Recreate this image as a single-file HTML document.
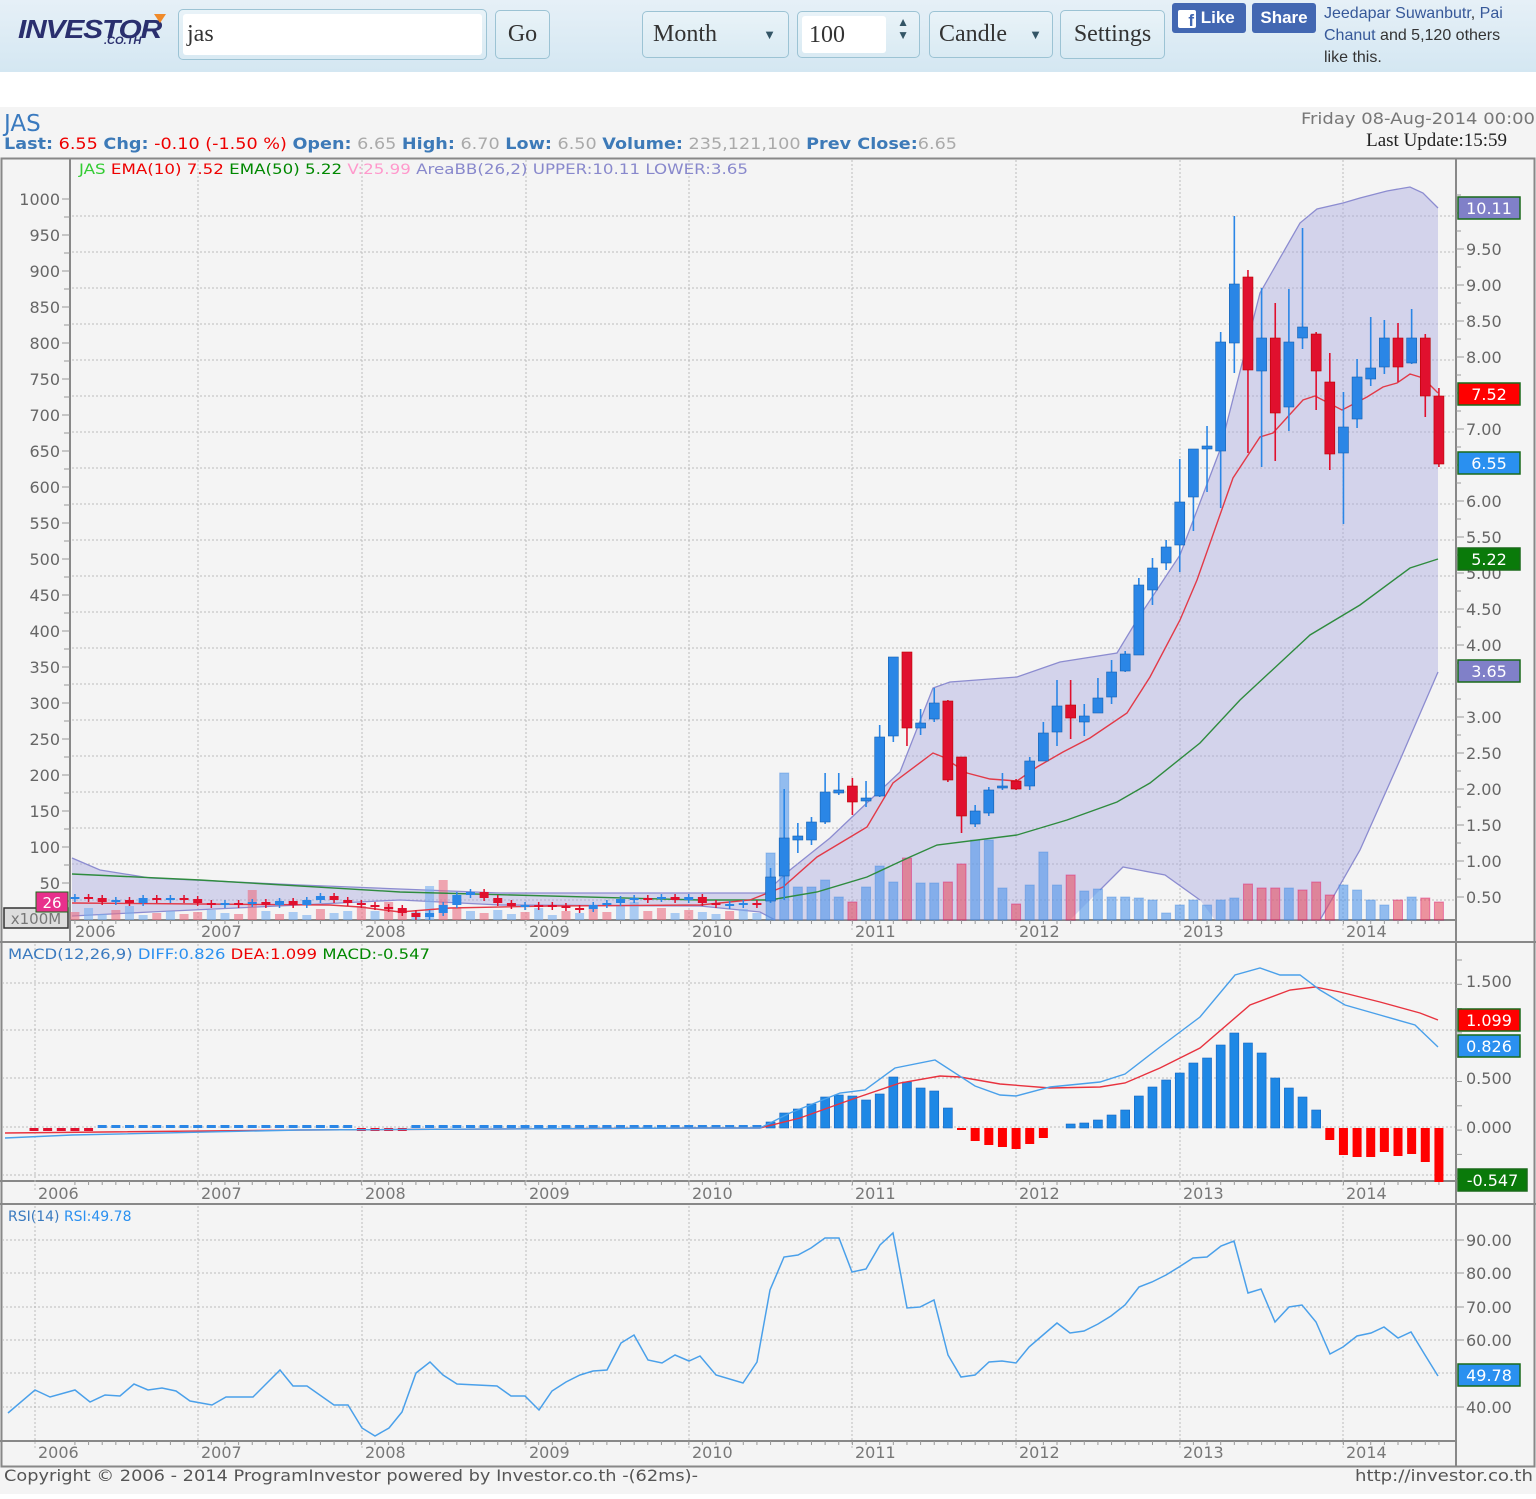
<!DOCTYPE html>
<html><head><meta charset="utf-8">
<style>
*{margin:0;padding:0;box-sizing:border-box}
html,body{width:1536px;height:1494px;overflow:hidden;background:#fff;font-family:"Liberation Sans",sans-serif}
#hdr{position:absolute;left:0;top:0;width:1536px;height:72px;background:linear-gradient(#e6f0f7,#d4e7f2)}
.box{position:absolute;border:1px solid #9cc3d4;border-radius:5px;background:linear-gradient(#e9f3f8,#d9eaf3);font-family:"Liberation Serif",serif;font-size:24px;color:#333}
#chart{position:absolute;left:0;top:107px;width:1536px;height:1387px;background:#f4f4f4}
svg text{font-family:"DejaVu Sans",sans-serif}
</style></head><body>
<div id="hdr">
  <div style="position:absolute;left:18px;top:14px;font:italic 900 26px 'Liberation Sans',sans-serif;color:#2a2f6e;letter-spacing:-1px;transform:scaleX(1.15);transform-origin:left">INVESTOR</div>
  <div style="position:absolute;left:154px;top:14px;width:0;height:0;border-left:6px solid transparent;border-right:6px solid transparent;border-top:9px solid #f08a2a"></div>
  <div style="position:absolute;left:104px;top:35px;font:italic 900 11px 'Liberation Sans',sans-serif;color:#2a2f6e">.CO.TH</div>
  <div class="box" style="left:178px;top:9px;width:309px;height:51px;padding:4px"><div style="background:#fff;height:100%;border-radius:3px;padding:6px 4px;line-height:28px">jas</div></div>
  <div class="box" style="left:495px;top:10px;width:55px;height:49px;text-align:center;line-height:47px">Go</div>
  <div class="box" style="left:642px;top:11px;width:147px;height:47px;line-height:45px;padding-left:10px">Month<span style="position:absolute;right:12px;font-size:13px;color:#356">▼</span></div>
  <div class="box" style="left:797px;top:11px;width:123px;height:47px;padding:4px"><div style="background:#fff;width:84px;height:100%;border-radius:3px;padding-left:7px;line-height:38px">100</div><span style="position:absolute;right:10px;top:4px;font-size:12px;line-height:13px;color:#356">▲<br>▼</span></div>
  <div class="box" style="left:929px;top:11px;width:124px;height:47px;line-height:45px;padding-left:9px">Candle<span style="position:absolute;right:10px;font-size:13px;color:#356">▼</span></div>
  <div class="box" style="left:1060px;top:10px;width:105px;height:49px;line-height:47px;text-align:center">Settings</div>
  <div style="position:absolute;left:1172px;top:3px;width:74px;height:30px;background:#4267b2;border-radius:3px;color:#fff;font:bold 17px 'Liberation Sans';line-height:30px;padding-left:6px"><span style="display:inline-block;width:18px;height:18px;background:#fff;color:#4267b2;border-radius:2px;font-size:17px;line-height:21px;text-align:right;padding-right:2px;vertical-align:-3px">f</span> Like</div>
  <div style="position:absolute;left:1252px;top:3px;width:64px;height:30px;background:#4267b2;border-radius:3px;color:#fff;font:bold 17px 'Liberation Sans';line-height:30px;text-align:center">Share</div>
  <div style="position:absolute;left:1324px;top:3px;width:198px;font:16px/22px 'Liberation Sans';color:#333"><span style="color:#365899">Jeedapar Suwanbutr</span>, <span style="color:#365899">Pai Chanut</span> and 5,120 others like this.</div>
</div>
<div id="chart"><svg id="s" width="1536" height="1387" viewBox="0 107 1536 1387" xmlns="http://www.w3.org/2000/svg"></svg></div>
<script>
var o=[];function A(s){o.push(s)}
function T(x,y,t,c,sz,anc,ext){A('<text x="'+x+'" y="'+y+'" fill="'+c+'" font-size="'+sz+'"'+(anc?' text-anchor="'+anc+'"':'')+(ext||'')+'>'+t+'</text>')}
function L(x1,y1,x2,y2,c,w,d){A('<line x1="'+x1+'" y1="'+y1+'" x2="'+x2+'" y2="'+y2+'" stroke="'+c+'" stroke-width="'+(w||1)+'"'+(d?' stroke-dasharray="'+d+'"':'')+'/>')}
function R(x,y,w,h,f,ext){A('<rect x="'+x+'" y="'+y+'" width="'+w+'" height="'+h+'" fill="'+f+'"'+(ext||'')+'/>')}
function P(pts,c,w,f){A('<polyline points="'+pts.map(function(p){return p.join(',')}).join(' ')+'" fill="'+(f||'none')+'" stroke="'+c+'" stroke-width="'+(w||1.3)+'"/>')}
var X=function(m){return 34+m*13.64};
var years=[[72,'2006'],[198,'2007'],[362,'2008'],[526,'2009'],[689,'2010'],[852,'2011'],[1016,'2012'],[1180,'2013'],[1343,'2014']];
T(4,131,'JAS','#3a7abf',23);
A('<text x="4" y="149" font-size="16" textLength="953" lengthAdjust="spacingAndGlyphs"><tspan fill="#3d7ab8" font-weight="bold">Last:</tspan><tspan fill="#e00"> 6.55 </tspan><tspan fill="#3d7ab8" font-weight="bold">Chg:</tspan><tspan fill="#e00"> -0.10 (-1.50 %) </tspan><tspan fill="#3d7ab8" font-weight="bold"> Open:</tspan><tspan fill="#aaa"> 6.65 </tspan><tspan fill="#3d7ab8" font-weight="bold">High:</tspan><tspan fill="#aaa"> 6.70 </tspan><tspan fill="#3d7ab8" font-weight="bold">Low:</tspan><tspan fill="#aaa"> 6.50 </tspan><tspan fill="#3d7ab8" font-weight="bold">Volume:</tspan><tspan fill="#aaa"> 235,121,100 </tspan><tspan fill="#3d7ab8" font-weight="bold"> Prev Close:</tspan><tspan fill="#aaa">6.65</tspan></text>');
A('<text x="1535" y="124" font-size="16" fill="#777" text-anchor="end" textLength="234" lengthAdjust="spacingAndGlyphs">Friday 08-Aug-2014 00:00</text>');
A('<text x="1507" y="146" font-size="19" fill="#222" text-anchor="end" style="font-family:\'Liberation Serif\',serif">Last Update:15:59</text>');
A('<rect x="1.5" y="158.5" width="1533" height="1308" fill="none" stroke="#888" stroke-width="2"/>');
L(70,158,70,942,'#888',2);L(1456,158,1456,1466,'#888',2);
L(0,942,1536,942,'#888',2);L(0,1204,1536,1204,'#888',2);
L(70,920,1456,920,'#888',2);L(0,1181,1456,1181,'#888',2);L(0,1441,1456,1441,'#888',2);
for(var y=216;y<=900;y+=36)L(72,y,1455,y,'#bbb',1,'2,2');
[983,1030,1078,1127,1175].forEach(function(y){L(2,y,1455,y,'#bbb',1,'2,2')});
[1240,1273,1307,1340,1373,1407].forEach(function(y){L(2,y,1455,y,'#bbb',1,'2,2')});
years.forEach(function(a,i){
 if(i>0)L(a[0],160,a[0],930,'#bbb',1,'2,2');
 L(i?a[0]:35,944,i?a[0]:35,1190,'#bbb',1,'2,2');
 L(i?a[0]:35,1206,i?a[0]:35,1450,'#bbb',1,'2,2');
 T(a[0]+3,937,a[1],'#777',16);T((i?a[0]:35)+3,1199,a[1],'#777',16);T((i?a[0]:35)+3,1458,a[1],'#777',16);
});
for(var m=3;m<104;m++){var x=X(m);L(x,920,x,924,'#999');L(x,1181,x,1185,'#999');L(x,1441,x,1445,'#999');}
for(var i=0;i<20;i++){var v=1000-i*50,y=199+i*36;T(60,y+6,v,'#666',16,'end');L(62,y,70,y,'#999');L(64,y+18,70,y+18,'#999')}
var up=[[72,858],[100,870],[150,878],[300,885],[500,893],[700,893],[765,893],[790,870],[830,838],[870,800],[900,772],[933,688],[950,682],[1017,677],[1060,662],[1117,653],[1137,620],[1180,555],[1220,450],[1260,293],[1300,223],[1317,209],[1343,203],[1360,198],[1387,191],[1410,187],[1423,193],[1438,208]];
var lo=[[1438,672],[1400,760],[1360,850],[1320,920],[1215,920],[1200,900],[1165,875],[1123,867],[1100,890],[1070,920],[775,920],[760,912],[700,906],[500,905],[400,900],[300,905],[150,912],[72,916]];
P(up.concat(lo),'none',0,'rgba(170,170,225,0.45)');
P(up,'#8c8cd0',1.3);P(lo.slice(0,4),'#8c8cd0',1.3);P(lo.slice(5,9),'#8c8cd0',1.3);P(lo.slice(10),'#8c8cd0',1.3);
var vo=[8,12,6,10,14,5,7,9,6,8,10,7,6,30,9,6,8,5,11,7,9,14,9,18,10,8,34,40,12,9,7,10,6,8,12,5,9,7,11,8,14,18,9,12,7,10,8,6,9,11,7];
for(var m=3;m<54;m++){var h=vo[m-3],x=X(m);R(x-4.5,920-h,9,h,(m%3==0||m%5==1)?'rgba(235,110,130,0.6)':'rgba(120,175,240,0.6)')}
var vn=[[853,0],[773,0],[887,0],[887,0],[880,0],[897,0],[902,1],[887,0],[866,0],[882,0],[858,1],[883,0],[883,0],[882,1],[864,1],[840,0],[840,0],[888,0],[904,1],[885,0],[852,0],[885,0],[875,1],[891,0],[889,0],[897,0],[897,0],[898,0],[900,0],[913,0],[905,0],[900,0],[905,0],[900,0],[898,0],[884,1],[888,1],[888,1],[888,0],[890,1],[882,1],[895,1],[885,0],[890,0],[900,0],[905,0],[900,1],[897,0],[898,1],[902,1]];
vn.forEach(function(v,i){var x=X(54+i);R(x-4.5,v[0],9,920-v[0],v[1]?'rgba(230,80,100,0.6)':'rgba(80,150,235,0.6)',' stroke="'+(v[1]?'#d06':'#48d')+'" stroke-opacity="0.4"')});
P([[72,874],[200,880],[400,892],[700,900],[770,900],[817,892],[867,877],[910,857],[937,845],[1017,835],[1067,820],[1117,802],[1150,783],[1200,743],[1240,700],[1310,635],[1360,605],[1410,568],[1438,559]],'#2e8b3e',1.4);
P([[72,903],[200,904],[330,905],[360,907],[400,912],[450,908],[550,906],[700,905],[750,900],[783,887],[817,857],[867,827],[893,783],[933,753],[943,757],[967,773],[990,779],[1017,781],[1037,767],[1063,752],[1090,738],[1127,713],[1150,677],[1180,620],[1197,580],[1233,478],[1260,437],[1273,433],[1303,400],[1315,396],[1342,410],[1367,397],[1383,387],[1397,383],[1410,374],[1423,378],[1438,393]],'#e23a48',1.4);
var cy=[897,898,902,900,903,898,900,898,899,903,905,903,904,902,905,901,905,900,896,900,903,905,907,908,913,917,913,905,895,892,898,903,906,905,905,906,908,909,905,903,899,898,899,897,900,897,903,905,904,903,904];
for(var m=3;m<54;m++){var c=cy[m-3],op=m>3?cy[m-4]:899,x=X(m),t=Math.min(c,op),b=Math.max(c,op);if(b-t<2)b=t+2;var col=c<op?'#2a86e6':'#e0102e';L(x,t-3,x,b+3,col,1.5);R(x-4.5,t,9,b-t,col)}
var cn=[[877,901,868,903,0],[838,876,789,900,0],[836,840,823,853,0],[822,840,817,845,0],[792,822,773,824,0],[790,793,773,795,0],[786,802,778,815,1],[798,801,781,807,0],[737,796,725,797,0],[657,736,657,742,0],[652,728,652,746,1],[723,728,709,735,0],[703,719,688,722,0],[701,780,700,782,1],[757,816,757,833,1],[811,824,805,827,0],[790,813,787,816,0],[786,788,773,790,0],[781,789,779,790,1],[761,786,757,790,0],[733,761,722,761,0],[706,732,680,746,0],[705,718,680,739,1],[716,722,704,736,0],[698,713,678,713,0],[672,697,660,704,0],[654,671,651,672,0],[585,655,578,655,0],[568,590,558,605,0],[547,563,540,570,0],[502,545,459,572,0],[449,497,449,531,0],[446,449,426,492,0],[342,451,332,508,0],[284,343,216,373,0],[277,370,270,453,1],[338,371,288,467,0],[338,413,303,461,1],[342,407,289,431,0],[327,338,228,349,0],[334,371,332,410,1],[382,454,353,470,1],[427,453,392,524,0],[377,419,359,428,0],[368,379,317,386,0],[338,367,320,374,0],[338,367,323,382,1],[338,363,309,364,0],[338,396,334,417,1],[396,464,388,467,1]];
cn.forEach(function(c,i){var x=X(54+i),col=c[4]?'#e0102e':'#2a86e6';L(x,c[2],x,c[3],col,1.6);R(x-5,c[0],10,Math.max(2,c[1]-c[0]),col,' stroke="'+(c[4]?'#b00':'#1560b0')+'" stroke-width="0.6"')});
for(var i=0;i<20;i++){var y=897-i*36;L(1456,y,1464,y,'#999');L(1456,y-18,1461,y-18,'#999');var v=(0.5+i*0.5).toFixed(2);if([3.5,6.5,7.5,10].indexOf(0.5+i*0.5)<0)T(1466,y+6,v,'#666',16)}
function BX(y,t,bg){R(1458,y,62,22,bg,' stroke="#1a6a1a" stroke-width="1.5"');T(1489,y+17,t,'#fff',16,'middle')}
BX(197,'10.11','#8080c8');BX(383,'7.52','#f00');BX(452,'6.55','#2a90f0');BX(548,'5.22','#0a7a0a');BX(660,'3.65','#8080c8');
R(4,908,64,20,'#ddd',' stroke="#333" stroke-width="1.5"');T(36,924,'x100M','#777',15,'middle');
R(36,892,32,20,'#e8308c',' stroke="#1a6a1a"');T(52,908,'26','#fff',15,'middle');
A('<text x="79" y="174" font-size="14" textLength="669" lengthAdjust="spacingAndGlyphs"><tspan fill="#3c3">JAS </tspan><tspan fill="#e00">EMA(10) 7.52 </tspan><tspan fill="#080">EMA(50) 5.22 </tspan><tspan fill="#f9c">V:25.99 </tspan><tspan fill="#88c">AreaBB(26,2) UPPER:10.11 LOWER:3.65</tspan></text>');
A('<text x="8" y="959" font-size="14" textLength="422" lengthAdjust="spacingAndGlyphs"><tspan fill="#3a7abf">MACD(12,26,9) </tspan><tspan fill="#2a90f0">DIFF:0.826 </tspan><tspan fill="#e00">DEA:1.099 </tspan><tspan fill="#080">MACD:-0.547</tspan></text>');
for(var m=0;m<54;m++){var x=X(m);if(x<6)continue;var red=(m<5)||(m>=24&&m<28);R(x-4.5,red?1128:1125,9,3,red?'#e0102e':'#2a86e6')}
var mh=[1122,1113,1109,1104,1097,1095,1096,1100,1094,1077,1082,1088,1091,1108,1130,1141,1145,1147,1149,1144,1138,1128,1124,1123,1120,1115,1110,1096,1087,1080,1073,1063,1058,1045,1033,1043,1053,1078,1088,1097,1110,1140,1155,1157,1157,1152,1156,1154,1162,1182];
mh.forEach(function(v,i){var x=X(54+i);if(v>=1128)R(x-4.5,1128,9,v-1128,'#f00');else R(x-4.5,v,9,1128-v,'#1e88e5',' stroke="#1565c0" stroke-width="0.6"')});
P([[5,1133],[300,1130],[700,1128],[760,1128],[800,1118],[850,1100],[900,1083],[940,1076],[960,1077],[1000,1084],[1050,1088],[1100,1087],[1125,1083],[1160,1068],[1200,1048],[1250,1005],[1290,990],[1315,987],[1340,992],[1380,1002],[1420,1013],[1438,1020]],'#e8333f',1.4);
P([[5,1138],[72,1135],[300,1130],[700,1128],[760,1128],[790,1113],[810,1105],[840,1093],[865,1090],[895,1068],[935,1060],[975,1086],[1000,1095],[1016,1096],[1050,1087],[1100,1082],[1125,1074],[1160,1047],[1200,1017],[1235,975],[1260,968],[1280,975],[1300,975],[1320,990],[1345,1005],[1380,1015],[1415,1025],[1438,1047]],'#4aa0ea',1.4);
[[981,'1.500'],[1078,'0.500'],[1127,'0.000']].forEach(function(a){T(1466,a[0]+6,a[1],'#666',16)});
for(var y=960;y<1180;y+=24.3)L(1456,y,1462,y,'#999');
function BX2(y,t,bg,w){R(1458,y,w||62,22,bg,' stroke="#1a6a1a" stroke-width="1.5"');T(1458+(w||62)/2,y+17,t,'#fff',16,'middle')}
BX2(1009,'1.099','#f00');BX2(1035,'0.826','#2a90f0');BX2(1169,'-0.547','#0a7a0a',69);
T(8,1221,'RSI(14) <tspan fill="#2a90f0">RSI:49.78</tspan>','#3a7abf',14);
P([[8,1413],[35,1390],[50,1397],[75,1390],[90,1402],[105,1395],[120,1396],[134,1384],[148,1390],[162,1388],[176,1391],[190,1401],[212,1405],[226,1397],[253,1397],[280,1370],[293,1386],[307,1386],[334,1405],[348,1405],[362,1428],[375,1436],[389,1428],[402,1412],[416,1373],[430,1362],[443,1375],[457,1384],[497,1386],[511,1396],[525,1396],[539,1410],[552,1391],[566,1382],[580,1375],[593,1371],[607,1370],[621,1343],[634,1335],[648,1360],[662,1363],[675,1355],[689,1361],[700,1356],[716,1375],[743,1383],[757,1362],[770,1290],[784,1257],[798,1255],[811,1248],[825,1238],[839,1238],[852,1272],[866,1269],[880,1245],[893,1233],[907,1308],[920,1307],[934,1300],[948,1355],[961,1377],[975,1375],[989,1362],[1002,1361],[1016,1363],[1029,1347],[1043,1335],[1057,1323],[1070,1333],[1084,1331],[1098,1324],[1111,1316],[1125,1305],[1139,1287],[1152,1282],[1166,1275],[1179,1267],[1193,1258],[1207,1257],[1221,1246],[1234,1241],[1248,1293],[1261,1289],[1275,1322],[1289,1307],[1302,1305],[1316,1322],[1330,1354],[1343,1347],[1357,1336],[1371,1333],[1384,1327],[1398,1338],[1411,1332],[1425,1355],[1438,1376]],'#4aa0ea',1.5);
[[1240,'90.00'],[1273,'80.00'],[1307,'70.00'],[1340,'60.00'],[1407,'40.00']].forEach(function(a){T(1466,a[0]+6,a[1],'#666',16);L(1456,a[0],1464,a[0],'#999')});
BX2(1364,'49.78','#2a90f0');
A('<text x="4" y="1481" font-size="16" fill="#555" textLength="694" lengthAdjust="spacingAndGlyphs">Copyright © 2006 - 2014 ProgramInvestor powered by Investor.co.th -(62ms)-</text>');
A('<text x="1533" y="1481" font-size="16" fill="#555" text-anchor="end" textLength="178" lengthAdjust="spacingAndGlyphs">http://investor.co.th</text>');
document.getElementById('s').innerHTML=o.join('');
</script>
</body></html>
